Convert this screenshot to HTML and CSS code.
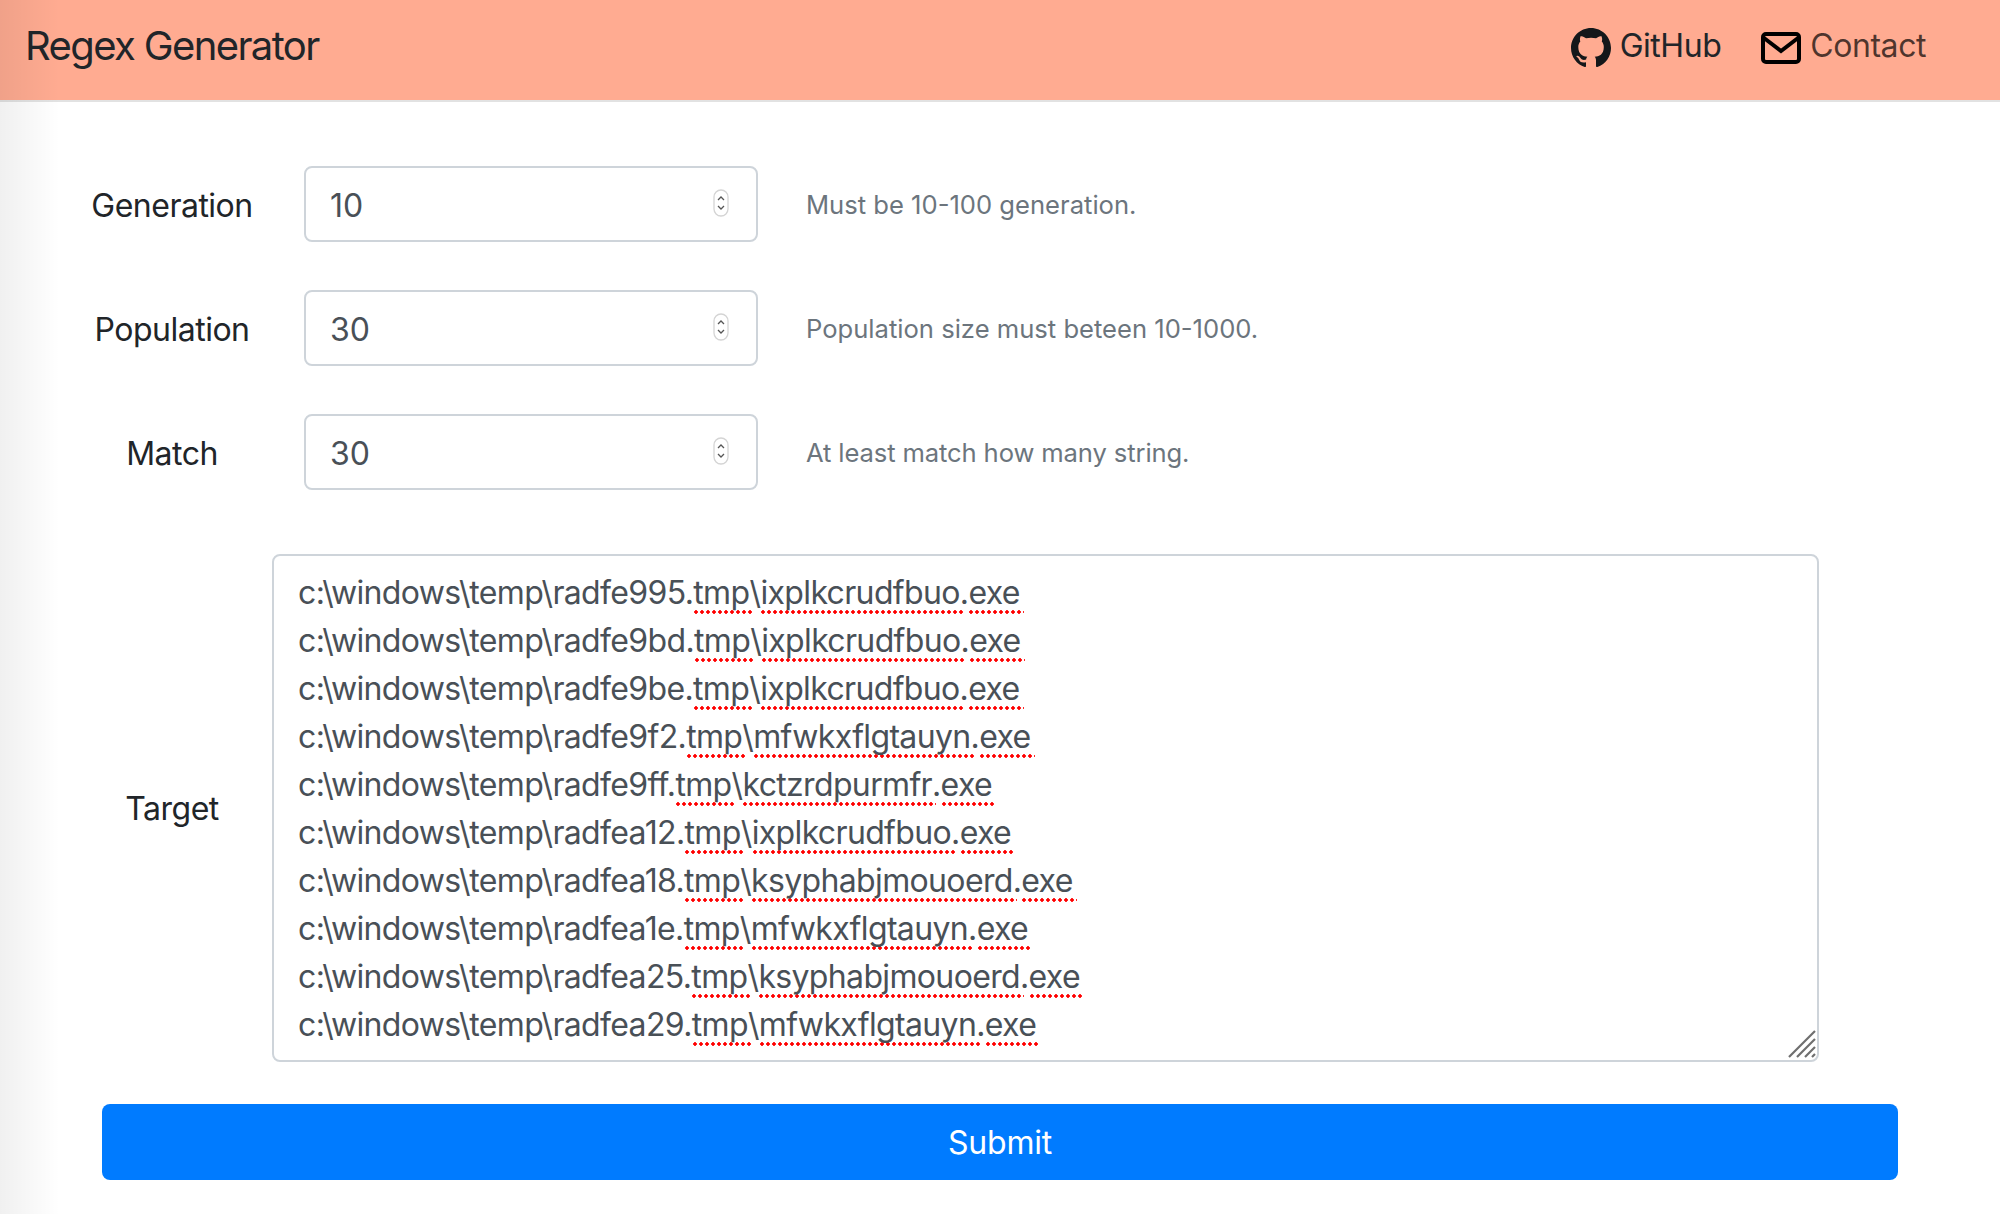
FILE: index.html
```html
<!DOCTYPE html>
<html lang="en">
<head>
<meta charset="utf-8">
<title>Regex Generator</title>
<link rel="stylesheet" href="styles.css">
</head>
<body>
<div class="edge"></div>
<nav class="navbar">
  <span class="brand">Regex Generator</span>
  <div class="links">
    <a class="link link-dark">
      <svg class="icon" viewBox="0 0 16 16"><path fill="#14171a" fill-rule="evenodd" d="M8 0C3.58 0 0 3.58 0 8c0 3.54 2.29 6.53 5.47 7.59.4.07.55-.17.55-.38 0-.19-.01-.82-.01-1.49-2.01.37-2.53-.49-2.69-.94-.09-.23-.48-.94-.82-1.13-.28-.15-.68-.52-.01-.53.63-.01 1.08.58 1.23.82.72 1.21 1.87.87 2.33.66.07-.52.28-.87.51-1.07-1.78-.2-3.64-.89-3.64-3.95 0-.87.31-1.59.82-2.15-.08-.2-.36-1.02.08-2.12 0 0 .67-.21 2.2.82.64-.18 1.32-.27 2-.27.68 0 1.36.09 2 .27 1.53-1.04 2.2-.82 2.2-.82.44 1.1.16 1.92.08 2.12.51.56.82 1.27.82 2.15 0 3.07-1.87 3.75-3.65 3.95.29.25.54.73.54 1.48 0 1.07-.01 1.93-.01 2.2 0 .21.15.46.55.38A8.013 8.013 0 0016 8c0-4.42-3.58-8-8-8z"/></svg>
      <span>GitHub</span>
    </a>
    <a class="link">
      <svg class="icon mail" viewBox="0 0 40 32"><rect x="2" y="2" width="36" height="28" rx="3" fill="none" stroke="#000" stroke-width="4"/><path d="M3 6l17 13L37 6" fill="none" stroke="#000" stroke-width="4"/></svg>
      <span>Contact</span>
    </a>
  </div>
</nav>
<main class="form">
  <div class="row">
    <label class="label">Generation</label>
    <div class="field"><input class="control" type="number" value="10"><svg class="spin" viewBox="0 0 16 28"><rect x="1" y="1" width="14" height="26" rx="7" fill="#fff" stroke="#d4d4d4" stroke-width="1.3"/><path d="M5 11l3-3 3 3M5 17l3 3 3-3" fill="none" stroke="#555" stroke-width="1.3"/></svg></div>
    <small class="hint">Must be 10-100 generation.</small>
  </div>
  <div class="row">
    <label class="label">Population</label>
    <div class="field"><input class="control" type="number" value="30"><svg class="spin" viewBox="0 0 16 28"><rect x="1" y="1" width="14" height="26" rx="7" fill="#fff" stroke="#d4d4d4" stroke-width="1.3"/><path d="M5 11l3-3 3 3M5 17l3 3 3-3" fill="none" stroke="#555" stroke-width="1.3"/></svg></div>
    <small class="hint">Population size must beteen 10-1000.</small>
  </div>
  <div class="row">
    <label class="label">Match</label>
    <div class="field"><input class="control" type="number" value="30"><svg class="spin" viewBox="0 0 16 28"><rect x="1" y="1" width="14" height="26" rx="7" fill="#fff" stroke="#d4d4d4" stroke-width="1.3"/><path d="M5 11l3-3 3 3M5 17l3 3 3-3" fill="none" stroke="#555" stroke-width="1.3"/></svg></div>
    <small class="hint hint-tight">At least match how many string.</small>
  </div>
  <div class="target-row">
    <label class="label">Target</label>
    <div class="textarea">
      <div>c:\windows\temp\radfe995.<u>tmp</u>\<u>ixplkcrudfbuo</u>.<u>exe</u></div>
      <div>c:\windows\temp\radfe9bd.<u>tmp</u>\<u>ixplkcrudfbuo</u>.<u>exe</u></div>
      <div>c:\windows\temp\radfe9be.<u>tmp</u>\<u>ixplkcrudfbuo</u>.<u>exe</u></div>
      <div>c:\windows\temp\radfe9f2.<u>tmp</u>\<u>mfwkxflgtauyn</u>.<u>exe</u></div>
      <div>c:\windows\temp\radfe9ff.<u>tmp</u>\<u>kctzrdpurmfr</u>.<u>exe</u></div>
      <div>c:\windows\temp\radfea12.<u>tmp</u>\<u>ixplkcrudfbuo</u>.<u>exe</u></div>
      <div>c:\windows\temp\radfea18.<u>tmp</u>\<u>ksyphabjmouoerd</u>.<u>exe</u></div>
      <div>c:\windows\temp\radfea1e.<u>tmp</u>\<u>mfwkxflgtauyn</u>.<u>exe</u></div>
      <div>c:\windows\temp\radfea25.<u>tmp</u>\<u>ksyphabjmouoerd</u>.<u>exe</u></div>
      <div>c:\windows\temp\radfea29.<u>tmp</u>\<u>mfwkxflgtauyn</u>.<u>exe</u></div>
      <svg class="grip" viewBox="0 0 28 28"><path d="M1 27L27 1M9 27L27 9M17 27L27 17M24 27l3-3" stroke="#6f6f6f" stroke-width="2.2" fill="none"/></svg>
    </div>
  </div>
  <button class="submit" type="button">Submit</button>
</main>
</body>
</html>
```
FILE: styles.css
```css
* { box-sizing: border-box; }
html, body { margin: 0; height: 100%; }
body {
  font-family: Inter, "Liberation Sans", sans-serif;
  font-size: 32px;
  color: #212529;
  background: #fff;
  position: relative;
  overflow: hidden;
}
.edge {
  position: absolute;
  inset: 0 auto 0 0;
  width: 60px;
  background: linear-gradient(to right, rgba(0,0,0,.06), rgba(0,0,0,0));
  pointer-events: none;
  z-index: 2;
}
.navbar {
  height: 102px;
  background: #ffab91;
  border-bottom: 2px solid #e2e2e2;
  display: flex;
  align-items: center;
  justify-content: space-between;
  padding: 0 74px 10px 25px;
}
.brand { font-size: 40px; letter-spacing: -1.62px; }
.links { display: flex; gap: 40px; align-items: center; }
.link { display: flex; align-items: center; gap: 9px; font-size: 32px; color: rgba(0,0,0,.7); letter-spacing: -.45px; }
.link-dark { color: #212529; }
.icon { width: 40px; height: 40px; margin-top: 6px; flex: none; }
.mail { height: 32px; }
.form { padding: 64px 72px 0; }
.row { display: flex; align-items: center; height: 76px; margin-bottom: 48px; }
.row .label { padding-top: 2px; }
.label { width: 200px; text-align: center; flex: none; letter-spacing: -.5px; }
.field { position: relative; width: 454px; height: 76px; flex: none; margin-left: 32px; }
.control {
  width: 100%;
  height: 100%;
  border: 2px solid #ced4da;
  border-radius: 8px;
  padding: 2px 24px 0;
  font: inherit;
  color: #495057;
  background: #fff;
  appearance: textfield;
}
.spin { position: absolute; right: 29px; top: 23px; width: 16px; height: 28px; }
.hint { margin-left: 48px; font-size: 25.6px; color: #6c757d; }
.hint-tight { letter-spacing: -.12px; }
.target-row { display: flex; align-items: center; margin: 64px 0 42px; }
.textarea {
  position: relative;
  width: 1547px;
  height: 508px;
  border: 2px solid #ced4da;
  border-radius: 8px;
  padding: 13px 24px 11px;
  font-size: 32px;
  line-height: 48px;
  letter-spacing: -.65px;
  color: #495057;
  white-space: nowrap;
}
.textarea u {
  text-decoration: none;
  padding: 0 4px 2px 0;
  margin-right: -4px;
  background: radial-gradient(circle at 50% 50%, #f00 1.5px, transparent 2px) left bottom / 6px 4px repeat-x;
}
.grip { position: absolute; right: 1px; bottom: 2px; width: 28px; height: 28px; }
.submit {
  display: block;
  width: 1796px;
  margin-left: 30px;
  height: 76px;
  border: 0;
  border-radius: 8px;
  background: #007bff;
  color: #fff;
  font: inherit;
  letter-spacing: -.2px;
}
```
